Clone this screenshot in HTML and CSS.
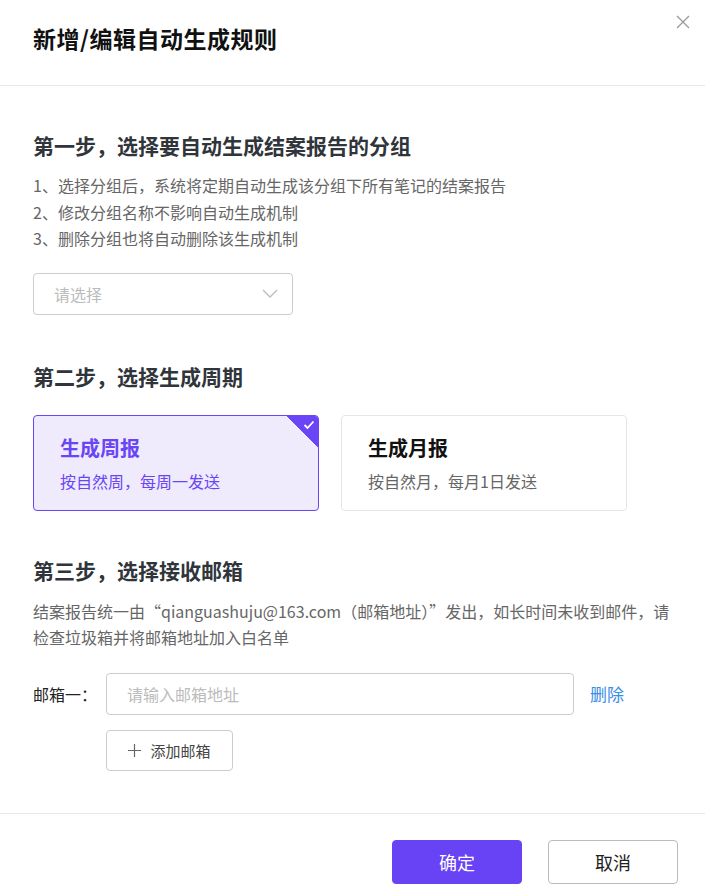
FILE: index.html
```html
<!DOCTYPE html>
<html lang="zh-CN">
<head>
<meta charset="utf-8">
<link rel="stylesheet" href="styles.css">
</head>
<body>
<div class="dialog">
  <header class="dlg-head">
    <h1 class="dlg-title">新增/编辑自动生成规则</h1>
    <button class="close-btn" aria-label="关闭">
      <svg width="14" height="14" viewBox="0 0 14 14"><path d="M1 1L13 13M13 1L1 13" stroke="#999" stroke-width="1.3" fill="none"/></svg>
    </button>
  </header>
  <main class="dlg-body">
    <section class="step step-1">
      <h2 class="step-title">第一步，选择要自动生成结案报告的分组</h2>
      <ol class="tips">
        <li>1、选择分组后，系统将定期自动生成该分组下所有笔记的结案报告</li>
        <li>2、修改分组名称不影响自动生成机制</li>
        <li>3、删除分组也将自动删除该生成机制</li>
      </ol>
      <div class="select">
        <span class="placeholder">请选择</span>
        <svg class="chev" width="16" height="9" viewBox="0 0 16 9"><path d="M1 1L8 8L15 1" stroke="#bbb" stroke-width="1.3" fill="none"/></svg>
      </div>
    </section>
    <section class="step step-2">
      <h2 class="step-title">第二步，选择生成周期</h2>
      <div class="cards">
        <div class="card active">
          <div class="card-title">生成周报</div>
          <div class="card-sub">按自然周，每周一发送</div>
          <span class="corner">
            <svg width="12" height="10" viewBox="0 0 12 10"><path d="M1.5 5L4.5 8L10.5 1.5" stroke="#fff" stroke-width="1.8" fill="none"/></svg>
          </span>
        </div>
        <div class="card">
          <div class="card-title">生成月报</div>
          <div class="card-sub">按自然月，每月1日发送</div>
        </div>
      </div>
    </section>
    <section class="step step-3">
      <h2 class="step-title">第三步，选择接收邮箱</h2>
      <p class="desc">结案报告统一由“qianguashuju@163.com（邮箱地址）”发出，如长时间未收到邮件，请<br>检查垃圾箱并将邮箱地址加入白名单</p>
      <div class="mail-row">
        <span class="mail-label">邮箱一：</span>
        <div class="input"><span class="placeholder">请输入邮箱地址</span></div>
        <a class="del">删除</a>
      </div>
      <div class="add-row">
        <button class="add-btn">
          <svg width="13" height="13" viewBox="0 0 13 13"><path d="M6.5 0V13M0 6.5H13" stroke="#666" stroke-width="1.2" fill="none"/></svg>
          添加邮箱
        </button>
      </div>
    </section>
  </main>
  <footer class="dlg-foot">
    <button class="btn primary">确定</button>
    <button class="btn">取消</button>
  </footer>
</div>
</body>
</html>
```

FILE: styles.css
```css
* { box-sizing: border-box; }
html, body { margin: 0; padding: 0; }
body {
  font-family: "Noto Sans CJK SC", "Liberation Sans", sans-serif;
  background: #fff;
  color: #333;
  width: 705px;
  height: 896px;
  overflow: hidden;
}
.dialog { width: 705px; }
.dlg-head {
  position: relative;
  height: 86px;
  padding: 22px 33px 0;
  border-bottom: 1px solid #e8e8e8;
}
.dlg-title {
  margin: 0;
  font-size: 23px;
  line-height: 32px;
  letter-spacing: 0.5px;
  font-weight: 700;
  color: #111;
}
.close-btn {
  position: absolute;
  top: 15px;
  right: 15px;
  border: 0;
  background: none;
  padding: 0;
  width: 14px;
  height: 14px;
  display: block;
}
.close-btn svg { display: block; }
.dlg-body { padding: 45px 33px 0; }
.step-1 { margin-bottom: 47px; }
.step-2 { margin-bottom: 45px; }
.step-3 { margin-bottom: 42px; }
.step-title {
  margin: 0;
  font-size: 21px;
  line-height: 28px;
  font-weight: 700;
  color: #2f353b;
}
.tips {
  list-style: none;
  margin: 13px 0 0;
  padding: 0;
  font-size: 16px;
  line-height: 26.5px;
  color: #666;
}
.select {
  margin-top: 21px;
  width: 260px;
  height: 42px;
  border: 1px solid #ccc;
  border-radius: 4px;
  display: flex;
  align-items: center;
  justify-content: space-between;
  padding: 0 14px 0 20px;
}
.placeholder { font-size: 16px; color: #bbb; }
.chev { display: block; }
.cards {
  margin-top: 25px;
  display: flex;
  gap: 22px;
}
.card {
  position: relative;
  width: 286px;
  height: 96px;
  border: 1px solid #e6e6e6;
  border-radius: 4px;
  padding: 18px 26px 0;
  overflow: hidden;
  background: #fff;
}
.card-title {
  font-size: 20px;
  line-height: 28px;
  font-weight: 700;
  color: #111;
}
.card-sub {
  margin-top: 8px;
  font-size: 16px;
  line-height: 22px;
  color: #666;
}
.card.active {
  background: #efebfc;
  border-color: #6a45f5;
}
.card.active .card-title,
.card.active .card-sub { color: #6a45f5; }
.corner {
  position: absolute;
  top: 0;
  right: 0;
  width: 31px;
  height: 31px;
  background: linear-gradient(to bottom left, #6a45f5 50%, transparent 50%);
}
.corner svg {
  position: absolute;
  top: 4px;
  right: 3px;
}
.desc {
  margin: 14px 0 0;
  font-size: 16px;
  line-height: 26px;
  color: #666;
  white-space: nowrap;
}
.mail-row {
  margin-top: 23px;
  display: flex;
  align-items: center;
}
.mail-label {
  width: 73px;
  font-size: 16px;
  color: #222;
}
.input {
  width: 468px;
  height: 42px;
  border: 1px solid #ccc;
  border-radius: 4px;
  padding: 0 20px;
  display: flex;
  align-items: center;
}
.del {
  margin-left: 16px;
  font-size: 17px;
  color: #3a8ee6;
}
.add-row {
  margin-top: 15px;
  padding-left: 73px;
}
.add-btn {
  width: 127px;
  height: 41px;
  border: 1px solid #ccc;
  border-radius: 4px;
  background: #fff;
  font-family: inherit;
  font-size: 15px;
  color: #444;
  display: flex;
  align-items: center;
  justify-content: center;
  gap: 9px;
  padding: 0;
}
.add-btn svg { display: block; }
.dlg-foot {
  border-top: 1px solid #e8e8e8;
  padding: 26px 27px 0 0;
  display: flex;
  justify-content: flex-end;
  gap: 26px;
}
.btn {
  width: 130px;
  height: 44px;
  border: 1px solid #bbb;
  border-radius: 4px;
  background: #fff;
  font-family: inherit;
  font-size: 18px;
  color: #222;
  padding: 0;
}
.btn.primary {
  background: #6842f5;
  border-color: #6842f5;
  color: #fff;
}
```
